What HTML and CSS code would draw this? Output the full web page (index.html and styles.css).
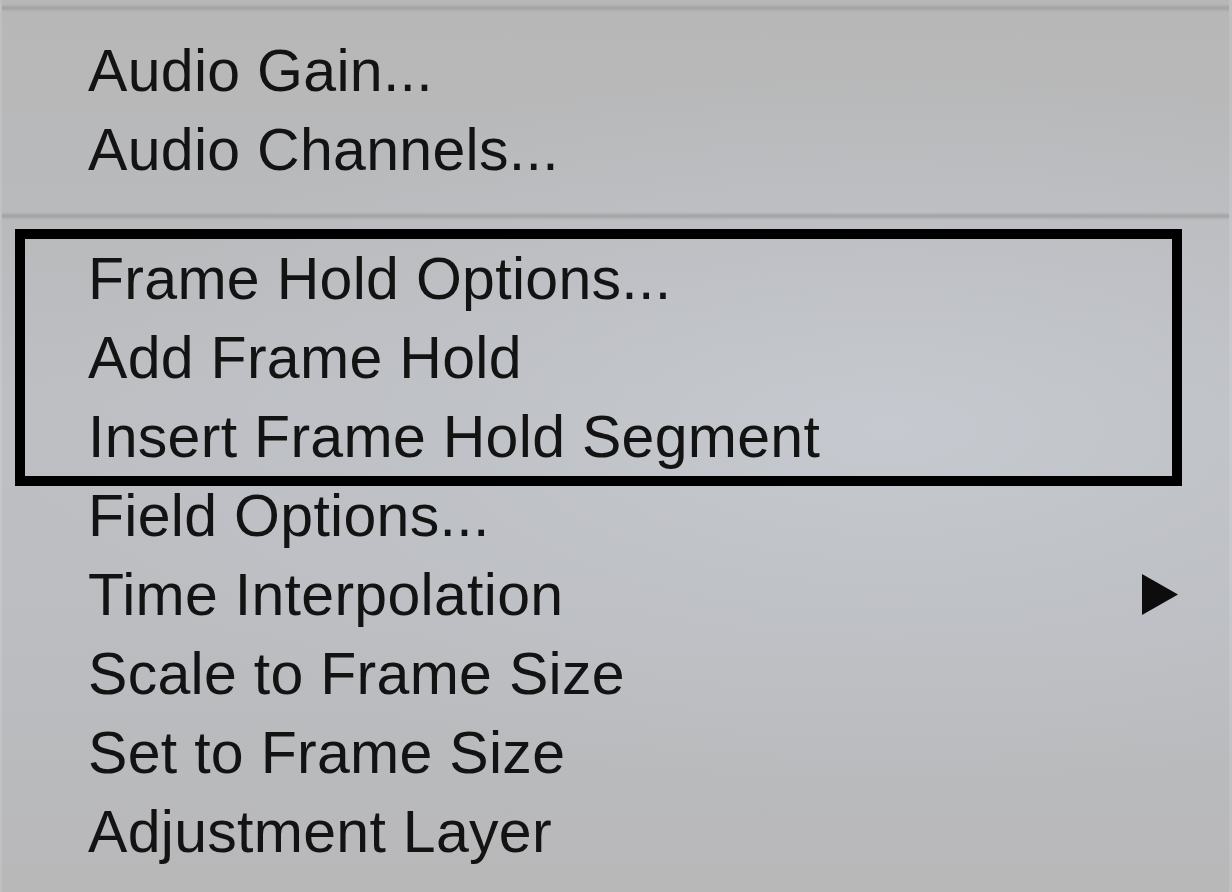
FILE: index.html
```html
<!DOCTYPE html>
<html lang="en">
<head>
    <meta charset="UTF-8">
    <meta name="viewport" content="width=device-width, initial-scale=1.0">
    <title>Clip Menu</title>
    <link rel="stylesheet" href="styles.css">
</head>
<body>
    <div class="menu">
        <div class="sep first"></div>

        <div class="item">Audio Gain...</div>
        <div class="item">Audio Channels...</div>

        <div class="sep"></div>

        <!-- Highlighted group -->
        <div class="group">
            <div class="item">Frame Hold Options...</div>
            <div class="item">Add Frame Hold</div>
            <div class="item">Insert Frame Hold Segment</div>
        </div>

        <div class="item">Field Options...</div>
        <div class="item submenu">
            <span>Time Interpolation</span>
            <svg class="arrow" width="38" height="43" viewBox="0 0 38 43">
                <path d="M1 1 L37 21.5 L1 42 Z" fill="#0d0d0d"/>
            </svg>
        </div>
        <div class="item">Scale to Frame Size</div>
        <div class="item">Set to Frame Size</div>
        <div class="item">Adjustment Layer</div>
    </div>
</body>
</html>
```

FILE: styles.css
```css
* {
    margin: 0;
    padding: 0;
    box-sizing: border-box;
}

html, body {
    width: 1232px;
    height: 892px;
    overflow: hidden;
}

body {
    background:
        radial-gradient(ellipse 70% 40% at 72% 48%, rgba(199,202,208,0.9) 0%, rgba(193,196,202,0.6) 50%, rgba(184,184,184,0) 100%),
        linear-gradient(to bottom, #b7b7b7 0%, #b9babc 25%, #bdbfc3 45%, #bcbec2 65%, #b8b8b9 100%);
    font-family: "Liberation Sans", Arial, sans-serif;
    color: #131313;
}

.menu {
    height: 892px;
    padding-top: 4px;
    border-left: 2px solid rgba(255,255,255,0.12);
    border-right: 3px solid rgba(255,255,255,0.1);
}

/* Separators */
.sep {
    height: 8px;
    margin: 22px 0 20px;
    background: linear-gradient(to bottom, rgba(160,160,160,0) 0%, #a2a2a2 50%, rgba(160,160,160,0) 100%);
}

.sep.first {
    margin-top: 0;
}

/* Items */
.item {
    height: 79px;
    line-height: 79px;
    padding-left: 86px;
    font-size: 59px;
    letter-spacing: 0.3px;
    white-space: nowrap;
}

.item.submenu {
    display: flex;
    align-items: center;
    justify-content: space-between;
    padding-right: 50px;
}

.arrow {
    margin-top: -3px;
}

/* Annotation box round the frame hold items */
.group {
    position: relative;
}

.group::after {
    content: '';
    position: absolute;
    top: -11px;
    bottom: -9px;
    left: 13px;
    right: 47px;
    border: 10px solid #000;
}
```
